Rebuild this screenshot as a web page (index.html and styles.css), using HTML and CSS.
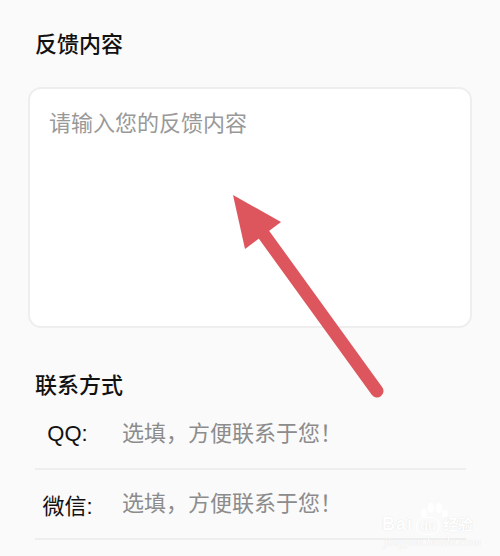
FILE: index.html
```html
<!DOCTYPE html>
<html lang="zh-CN">
<head>
<meta charset="utf-8">
<title>反馈内容</title>
<link rel="stylesheet" href="styles.css">
</head>
<body>
<main class="page">
  <h2 class="title">反馈内容</h2>
  <div class="card"><span class="hint big">请输入您的反馈内容</span></div>
  <h2 class="title contact">联系方式</h2>
  <div class="row"><span class="label">QQ:</span><span class="hint">选填，方便联系于您！</span></div>
  <div class="row"><span class="label">微信:</span><span class="hint">选填，方便联系于您！</span></div>
</main>
<svg class="arrow" width="500" height="556" viewBox="0 0 500 556" aria-hidden="true">
  <line x1="377" y1="391" x2="262" y2="232" stroke="#dd565d" stroke-width="13" stroke-linecap="round"/>
  <polygon points="233,195 281,222 245,249" fill="#dd565d"/>
</svg>
<div class="mark">
  <svg class="paw" width="30" height="26" viewBox="0 0 30 26" aria-hidden="true">
    <ellipse cx="6" cy="11" rx="3" ry="4"/>
    <ellipse cx="13" cy="6" rx="3.4" ry="5"/>
    <ellipse cx="21" cy="6" rx="3.4" ry="5"/>
    <ellipse cx="27" cy="12" rx="3" ry="4"/>
  </svg>
  <div class="brand"><span class="bai">Bai</span><span class="du">du</span><span class="jy">经验</span></div>
  <div class="url">jingyan.baidu.com</div>
</div>
</body>
</html>
```

FILE: styles.css
```css
* { box-sizing: border-box; }
html, body { margin: 0; height: 100%; }
body {
  width: 500px;
  height: 556px;
  overflow: hidden;
  background: #fafafa;
  font-family: "Liberation Sans", "Noto Sans CJK SC", sans-serif;
  position: relative;
}
.page { padding: 31px 28px 0; }
.title {
  margin: 0 0 0 7px;
  font-size: 22px;
  line-height: 28px;
  font-weight: 500;
  color: #111;
}
.card {
  margin-top: 28px;
  height: 241px;
  padding: 20px 19px;
  background: #fff;
  border: 2px solid #eeeeee;
  border-radius: 13px;
}
.contact { margin-top: 44px; }
.hint { font-size: 22px; line-height: 30px; color: #8c8c8c; }
.hint.big { display: block; color: #999; }
.row {
  margin: 0 6px 0 7px;
  height: 70px;
  display: flex;
  align-items: center;
  border-bottom: 2px solid #eeeeee;
}
.label {
  flex: none;
  width: 65px;
  margin-right: 22px;
  font-size: 22px;
  color: #111;
  text-align: center;
}
.arrow { position: absolute; left: 0; top: 0; }
.mark {
  position: absolute;
  left: 382px;
  top: 502px;
  width: 112px;
  height: 50px;
  color: #fff;
  text-shadow: 0 0 1px #d8d8d8;
}
.paw { position: absolute; left: 36px; top: 0; fill: #fff; }
.brand {
  position: absolute;
  left: 0;
  top: 10px;
  white-space: nowrap;
  font-size: 18px;
  line-height: 24px;
  font-weight: 700;
}
.bai { letter-spacing: 1px; }
.du {
  display: inline-block;
  margin: 0 3px;
  padding: 0 3px;
  font-size: 13px;
  line-height: 16px;
  border-radius: 8px;
  border: 1px solid #fff;
}
.jy { font-size: 15px; }
.url {
  position: absolute;
  left: 2px;
  top: 33px;
  white-space: nowrap;
  font-family: "Liberation Serif", serif;
  font-size: 13px;
  font-style: italic;
  line-height: 14px;
}
```
